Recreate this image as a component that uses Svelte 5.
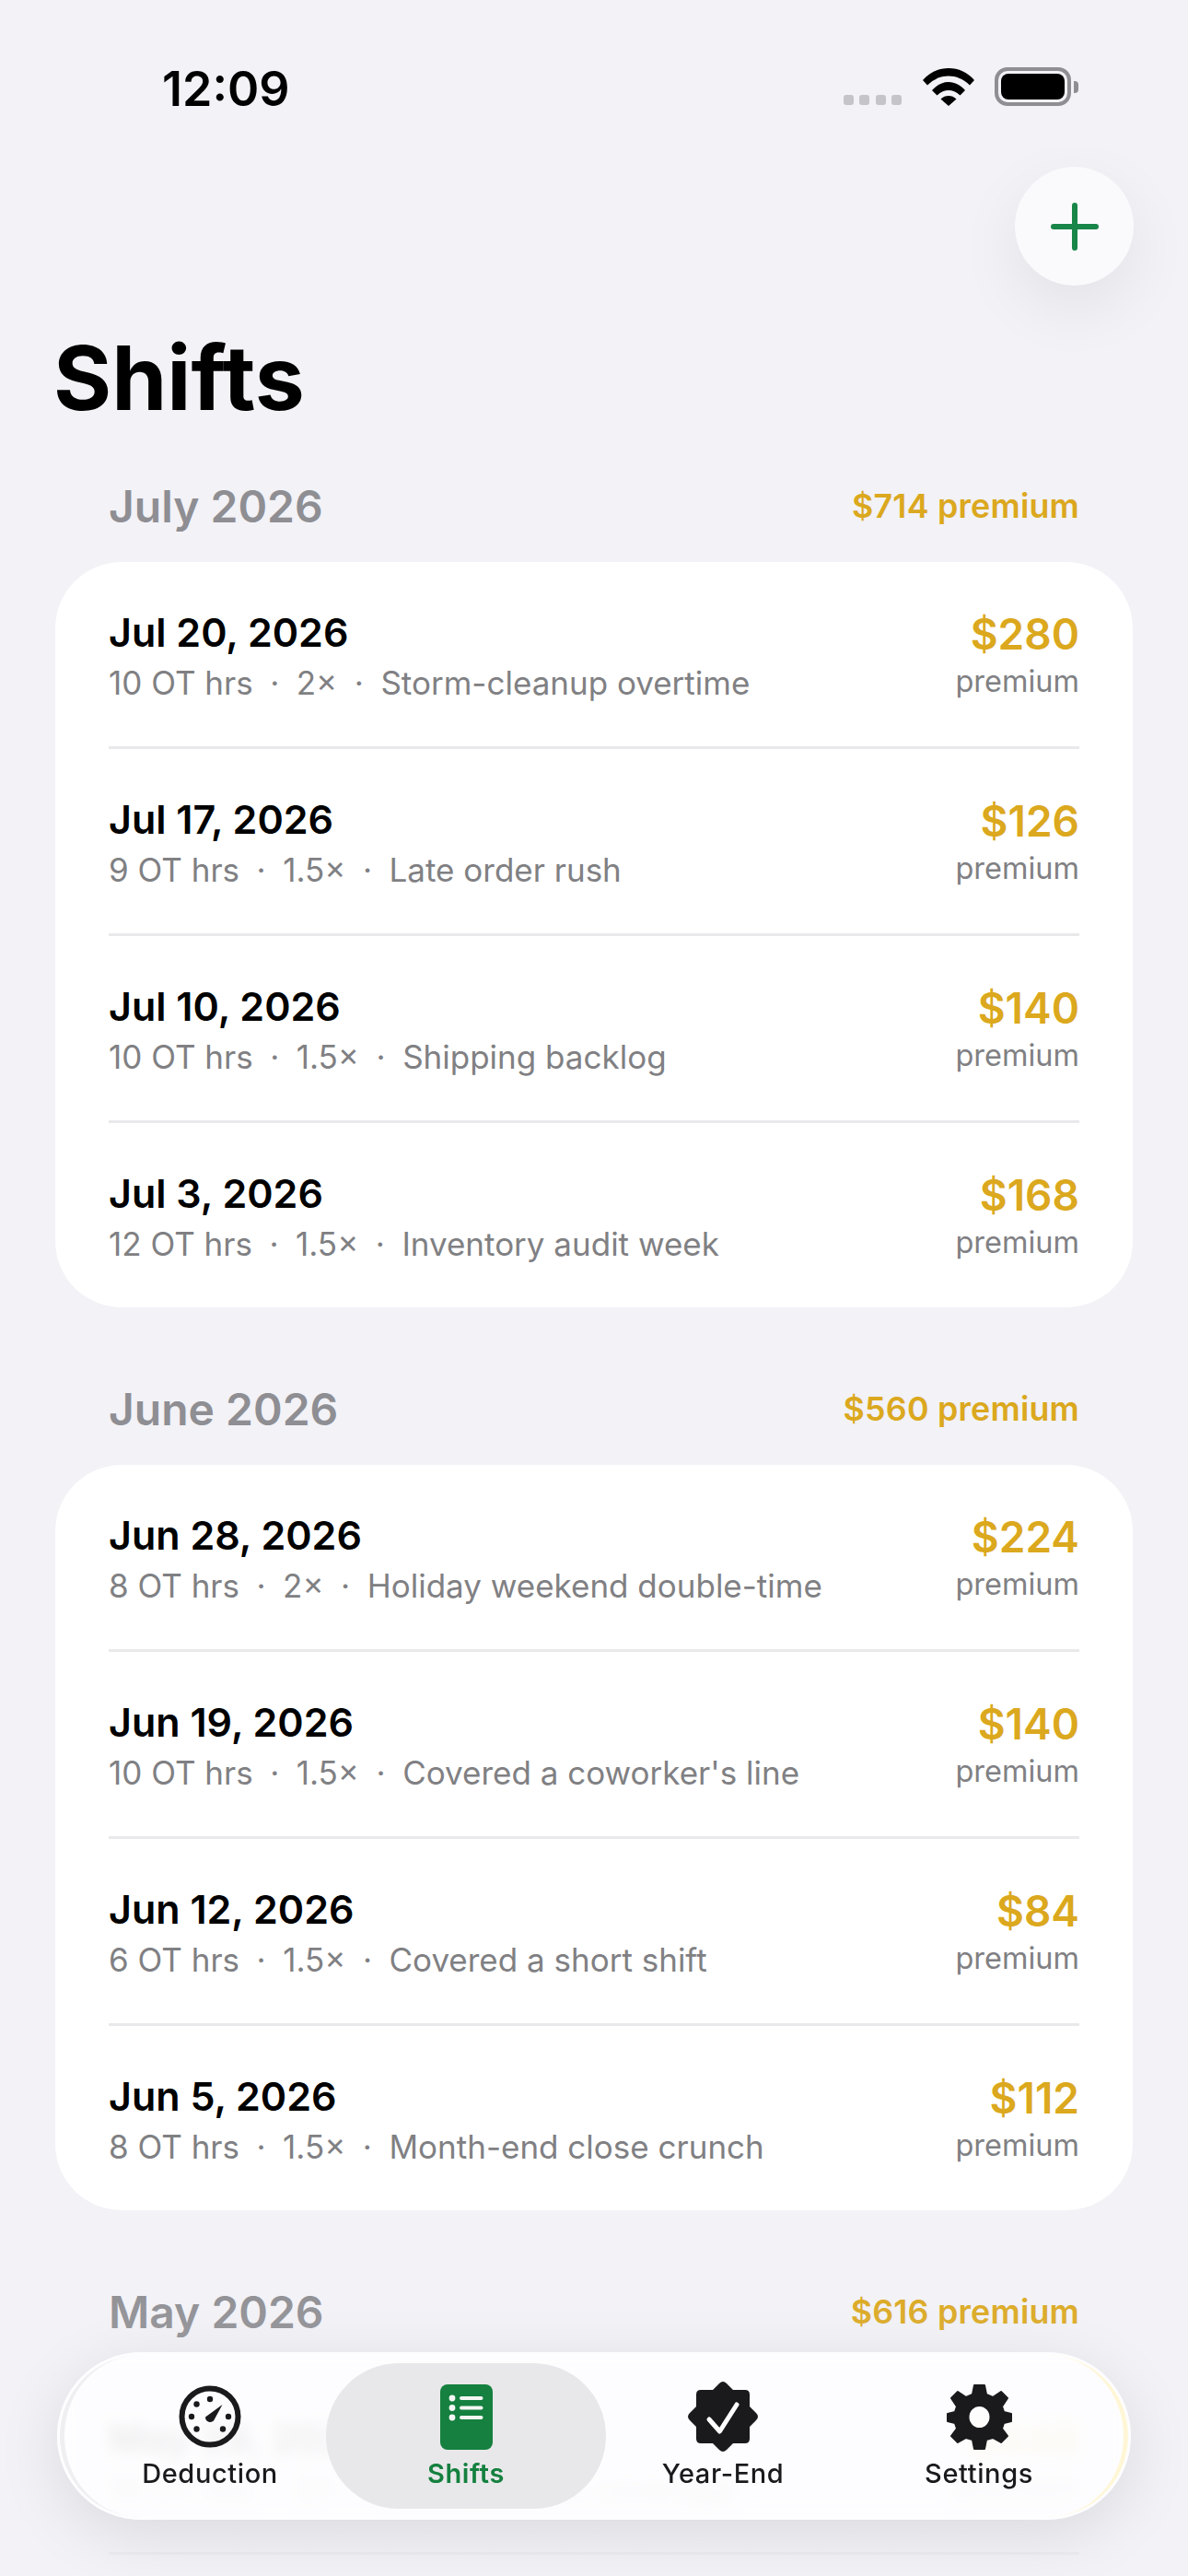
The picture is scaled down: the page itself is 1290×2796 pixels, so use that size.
<script>
  const sections = [
    { title: 'July 2026', total: '$714 premium', rows: [
      ['Jul 20, 2026', '10 OT hrs', '2×', 'Storm-cleanup overtime', '$280'],
      ['Jul 17, 2026', '9 OT hrs', '1.5×', 'Late order rush', '$126'],
      ['Jul 10, 2026', '10 OT hrs', '1.5×', 'Shipping backlog', '$140'],
      ['Jul 3, 2026', '12 OT hrs', '1.5×', 'Inventory audit week', '$168'],
    ]},
    { title: 'June 2026', total: '$560 premium', rows: [
      ['Jun 28, 2026', '8 OT hrs', '2×', 'Holiday weekend double-time', '$224'],
      ['Jun 19, 2026', '10 OT hrs', '1.5×', "Covered a coworker's line", '$140'],
      ['Jun 12, 2026', '6 OT hrs', '1.5×', 'Covered a short shift', '$84'],
      ['Jun 5, 2026', '8 OT hrs', '1.5×', 'Month-end close crunch', '$112'],
    ]},
    { title: 'May 2026', total: '$616 premium', under: true, rows: [
      ['May 29, 2026', '16 OT hrs', '2×', 'Holiday week coverage', '$448'],
    ]},
  ];
</script>

<div class="page">
  <div class="status">
    <span class="time">12:09</span>
    <div class="status-icons">
      <div class="dots"><i></i><i></i><i></i><i></i></div>
      <svg class="wifi" viewBox="0 0 56 41" aria-hidden="true">
        <path d="M0 13 C8 4 17 0 28 0 C39 0 48 4 56 13 L51 18.5 C44 11.5 36 8.5 28 8.5 C20 8.5 12 11.5 5 18.5 Z" />
        <path d="M10 24 C15 18.5 21 15 28 15 C35 15 41 18.5 46 24 L40.5 29.5 C36.5 25.5 32 24 28 24 C24 24 19.5 25.5 15.5 29.5 Z" />
        <path d="M19.5 33.5 C22 31 25 30 28 30 C31 30 34 31 36.5 33.5 L28 41 Z" />
      </svg>
      <div class="battery"><div class="cell"></div></div>
      <div class="nub"></div>
    </div>
  </div>

  <div class="fab-row">
    <button class="fab" aria-label="Add shift">
      <svg viewBox="0 0 52 52" aria-hidden="true"><path d="M26 3v46M3 26h46" /></svg>
    </button>
  </div>

  <h1>Shifts</h1>

  {#each sections as s}
    <section class:under={s.under}>
      <div class="sec-head">
        <h2>{s.title}</h2>
        <span class="sec-total">{s.total}</span>
      </div>
      <div class="card">
        {#each s.rows as r}
          <div class="row">
            <div class="left">
              <div class="date">{r[0]}</div>
              <div class="sub"><span>{r[1]}</span><b>·</b><span>{r[2]}</span><b>·</b><span>{r[3]}</span></div>
            </div>
            <div class="right">
              <div class="amt">{r[4]}</div>
              <div class="prem">premium</div>
            </div>
          </div>
        {/each}
        {#if s.under}<div class="rest"></div>{/if}
      </div>
    </section>
  {/each}

  <div class="fade"></div>

  <nav class="tabbar">
    <div class="tab">
      <div class="ic">
        <svg width="68" height="68" viewBox="0 0 68 68" aria-hidden="true">
          <circle cx="34" cy="34" r="30.5" fill="none" stroke="#1a1a1c" stroke-width="6" />
          <g fill="#1a1a1c">
            <circle cx="34" cy="15" r="3.2" /><circle cx="19.5" cy="20.5" r="3.2" /><circle cx="14" cy="34" r="3.2" />
            <circle cx="54" cy="34" r="3.2" /><circle cx="19.5" cy="47.5" r="3.2" /><circle cx="48" cy="47.5" r="3.2" />
            <path d="M47.5 21 L38 38.5 A5.4 5.4 0 0 1 29 34.4 Z" />
          </g>
        </svg>
      </div>
      <span>Deduction</span>
    </div>
    <div class="tab active">
      <div class="ic">
        <svg width="57" height="71" viewBox="0 0 57 71" aria-hidden="true">
          <rect width="57" height="71" rx="8" fill="#15803f" />
          <g fill="#f4f6f4">
            <circle cx="13" cy="15" r="3.4" /><circle cx="13" cy="25.5" r="3.4" /><circle cx="13" cy="36" r="3.4" />
            <rect x="21" y="13" width="25.5" height="4" rx="2" /><rect x="21" y="23.5" width="25.5" height="4" rx="2" /><rect x="21" y="34" width="25.5" height="4" rx="2" />
          </g>
        </svg>
      </div>
      <span>Shifts</span>
    </div>
    <div class="tab">
      <div class="ic">
        <svg width="76" height="76" viewBox="0 0 76 76" aria-hidden="true">
          <path fill="#1a1a1c" d="M38 0 Q40 0 42 2 L49 9 H62 Q67 9 67 14 V27 L74 34 Q78 38 74 42 L67 49 V62 Q67 67 62 67 H49 L42 74 Q38 78 34 74 L27 67 H14 Q9 67 9 62 V49 L2 42 Q-2 38 2 34 L9 27 V14 Q9 9 14 9 H27 L34 2 Q36 0 38 0 Z" />
          <path d="M23 41 L34.5 54 L53 25" fill="none" stroke="#fff" stroke-width="5" stroke-linecap="round" stroke-linejoin="round" />
        </svg>
      </div>
      <span>Year-End</span>
    </div>
    <div class="tab">
      <div class="ic">
        <svg width="71" height="71" viewBox="0 0 71 71" aria-hidden="true">
          <path fill="#1a1a1c" fill-rule="evenodd" stroke="#1a1a1c" stroke-width="2" stroke-linejoin="round" d="M30 1 H41 L43 11 L50 14 L59 8 L66 15 L60 24 L62 30 L70 32 V40 L62 42 L60 48 L66 56 L59 63 L50 58 L43 60 L41 70 H30 L28 60 L21 58 L12 63 L5 56 L11 48 L9 42 L1 40 V32 L9 30 L11 24 L5 15 L12 8 L21 14 L28 11 Z M35.5 23 A12 12.5 0 1 0 35.5 48 A12 12.5 0 1 0 35.5 23 Z" />
        </svg>
      </div>
      <span>Settings</span>
    </div>
  </nav>
</div>

<style>
  :global(body) { margin: 0; background: #f2f2f7; }
  .page {
    position: relative;
    width: 1290px;
    height: 2796px;
    overflow: hidden;
    background: #f2f2f7;
    font-family: Inter, "Liberation Sans", sans-serif;
    color: #000;
  }
  .status {
    display: flex;
    justify-content: space-between;
    align-items: center;
    height: 42px;
    padding: 73px 119px 0 176px;
  }
  .time { font-size: 52px; font-weight: 600; line-height: 42px; padding-top: 6px; }
  .status-icons { display: flex; align-items: center; }
  .dots { display: flex; gap: 6.5px; align-self: flex-end; margin-right: 23px; margin-bottom: 1px; }
  .dots i { width: 11px; height: 11px; border-radius: 3px; background: #c4c4c9; display: block; }
  .wifi { width: 56px; height: 41px; fill: #000; margin-right: 22px; }
  .battery {
    width: 83px; height: 42px; box-sizing: border-box;
    border: 4px solid #8e8e93; border-radius: 14px; padding: 3px;
  }
  .cell { width: 100%; height: 100%; background: #000; border-radius: 8px; }
  .nub { width: 5px; height: 13px; background: #8e8e93; border-radius: 0 4px 4px 0; margin-left: 3px; }

  .fab-row { display: flex; justify-content: flex-end; padding: 66px 59px 0 0; }
  .fab {
    width: 129px; height: 129px; border-radius: 50%; border: 0; padding: 0;
    background: #fafafd;
    box-shadow: 0 24px 70px rgba(0,0,0,.07);
    display: flex; align-items: center; justify-content: center;
  }
  .fab svg { width: 52px; height: 52px; }
  .fab path { stroke: #188549; stroke-width: 6; stroke-linecap: round; fill: none; }

  h1 { margin: 43px 0 0 58px; font-size: 96.5px; font-weight: 700; line-height: 114px; }

  section { margin: 0 60px; }
  section + section { margin-top: 81px; }
  h1 + section { margin-top: 53px; }
  .sec-head {
    display: flex; justify-content: space-between; align-items: center;
    height: 58px; padding: 0 58px; margin-bottom: 32px;
  }
  h2 { margin: 0; font-size: 48px; font-weight: 600; color: #8e8e93; }
  .sec-total { font-size: 35.8px; font-weight: 600; color: #dba81e; letter-spacing: .2px; }
  .card { background: #fff; border-radius: 72px; padding: 0 58px; }
  .row {
    position: relative;
    height: 203px; box-sizing: border-box; padding-top: 3px;
    display: flex; justify-content: space-between; align-items: center;
    border-top: 3px solid #e9e9eb;
  }
  .row:first-child { border-top: 0; height: 200px; }
  .date { font-size: 43px; font-weight: 600; line-height: 52px; }
  .sub { font-size: 35px; color: #808083; line-height: 46px; margin-top: 6px; display: flex; }
  .sub b { font-weight: 400; margin: 0 18.5px; }
  .right { text-align: right; }
  .amt { font-size: 46px; font-weight: 600; color: #dba81e; line-height: 52px; }
  .prem { font-size: 32.5px; color: #808083; line-height: 44px; margin-top: 4px; }

  .under .left, .under .right { position: relative; z-index: 2; }
  .rest {
    position: relative; z-index: 2; height: 60px;
    border-top: 3px solid rgba(225,225,228,.3);
  }

  .fade {
    position: absolute; z-index: 1; left: 0; right: 0; top: 2470px; bottom: 0;
    background: linear-gradient(to bottom,
      rgba(242,242,247,0) 0,
      rgba(242,242,247,.15) 88px,
      rgba(242,242,247,.985) 100px,
      rgba(242,242,247,.985) 100%);
  }
  .tabbar {
    position: absolute; z-index: 3; left: 62px; top: 2553px; width: 1166px; height: 182px;
    box-sizing: border-box; border-radius: 91px;
    background: rgba(254,254,255,.93);
    backdrop-filter: blur(8px);
    box-shadow: 0 16px 70px rgba(0,0,0,.1);
    display: grid; grid-template-columns: 252px 304px 254px 302px;
    padding: 12px 14px 12px 40px;
  }
  .tabbar::before {
    content: ""; position: absolute; inset: 3px; border-radius: 88px; pointer-events: none;
    border-left: 5px solid #efeff2;
    border-right: 5px solid #fff6d6;
  }
  .tab {
    position: relative;
    display: flex; flex-direction: column; align-items: center;
    border-radius: 79px; padding-top: 20px;
    font-size: 29px; font-weight: 500; letter-spacing: .6px; color: #1a1a1c;
  }
  .ic { height: 76px; display: flex; align-items: center; justify-content: center; margin-bottom: 7px; }
  .tab span { line-height: 34px; }
  .active { background: rgba(230,230,232,.92); color: #15803f; font-weight: 600; }
</style>
